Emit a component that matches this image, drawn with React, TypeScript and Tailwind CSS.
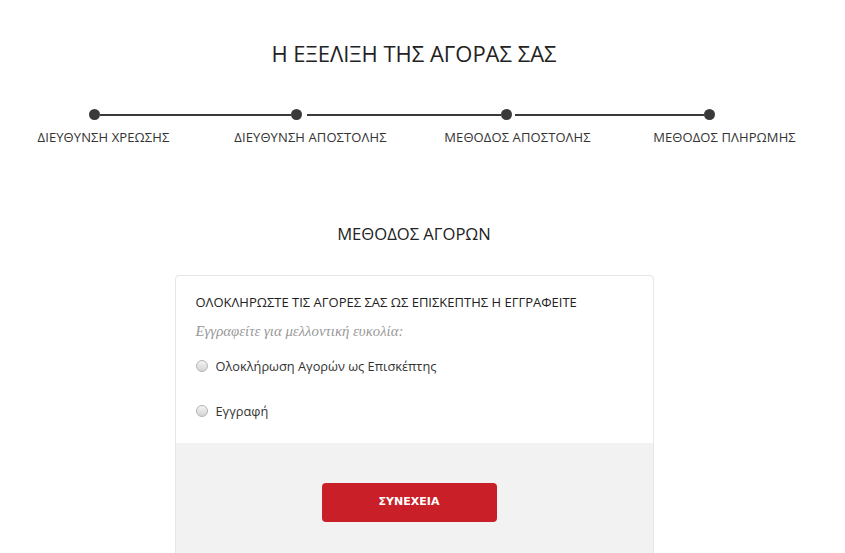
export default function App() {
  const steps = [
    "ΔΙΕΥΘΥΝΣΗ ΧΡΕΩΣΗΣ",
    "ΔΙΕΥΘΥΝΣΗ ΑΠΟΣΤΟΛΗΣ",
    "ΜΕΘΟΔΟΣ ΑΠΟΣΤΟΛΗΣ",
    "ΜΕΘΟΔΟΣ ΠΛΗΡΩΜΗΣ",
  ];

  return (
    <main className="w-[845px] h-[553px] overflow-hidden bg-white text-[#333] font-['Open_Sans',sans-serif]">
      <div className="w-[828px]">
        {/* ================= PROGRESS ================= */}
        <h1 className="pt-[38px] text-center text-[22px] leading-[30px] text-[#222]">
          Η ΕΞΕΛΙΞΗ ΤΗΣ ΑΓΟΡΑΣ ΣΑΣ
        </h1>

        <div className="mt-[41px] ml-[89px] flex items-center">
          <span className="w-[11px] h-[11px] rounded-full bg-[#3a3a3a]" />
          <span className="w-[191px] h-[2px] bg-[#3a3a3a]" />
          <span className="w-[11px] h-[11px] rounded-full bg-[#3a3a3a]" />
          <span className="w-[194px] h-[2px] bg-[#3a3a3a] ml-[5px]" />
          <span className="w-[11px] h-[11px] rounded-full bg-[#3a3a3a]" />
          <span className="w-[189px] h-[2px] bg-[#3a3a3a] ml-[3px]" />
          <span className="w-[11px] h-[11px] rounded-full bg-[#3a3a3a]" />
        </div>

        <div className="mt-[9px] grid grid-cols-4">
          {steps.map((s) => (
            <div key={s} className="text-center text-[13px] leading-[16px] tracking-[0.1px]">
              {s}
            </div>
          ))}
        </div>

        {/* ================= METHOD ================= */}
        <h2 className="mt-[77px] text-center text-[16.6px] leading-[24px] text-[#222]">
          ΜΕΘΟΔΟΣ ΑΓΟΡΩΝ
        </h2>

        <div className="mt-[29px] mx-auto w-[479px] border border-[#e6e6e6] rounded-[4px] overflow-hidden">
          <div className="px-[20px] pt-[17px] h-[167px]">
            <p className="text-[13px] leading-[18px] text-[#222]">
              ΟΛΟΚΛΗΡΩΣΤΕ ΤΙΣ ΑΓΟΡΕΣ ΣΑΣ ΩΣ ΕΠΙΣΚΕΠΤΗΣ Η ΕΓΓΡΑΦΕΙΤΕ
            </p>
            <p className="mt-[11px] italic text-[14.8px] leading-[18px] text-[#999] font-['Liberation_Serif',serif]">
              Εγγραφείτε για μελλοντική ευκολία:
            </p>
            <div className="mt-[17px] flex flex-col gap-[27px]">
              {["Ολοκλήρωση Αγορών ως Επισκέπτης", "Εγγραφή"].map((l) => (
                <label key={l} className="flex items-center gap-[8px] text-[12.8px] leading-[18px] text-[#333]">
                  <span className="w-[12px] h-[12px] rounded-full border border-[#b5b5b5] bg-gradient-to-b from-[#f4f4f4] to-[#d4d4d4]" />
                  {l}
                </label>
              ))}
            </div>
          </div>
          <div className="bg-[#f2f2f2] pt-[40px] pb-[40px]">
            <button className="ml-[146px] w-[175px] h-[39px] rounded-[4px] bg-[#c91f28] text-white text-[11px] font-bold font-['DejaVu_Sans',sans-serif]">
              ΣΥΝΕΧΕΙΑ
            </button>
          </div>
        </div>
      </div>
    </main>
  );
}
